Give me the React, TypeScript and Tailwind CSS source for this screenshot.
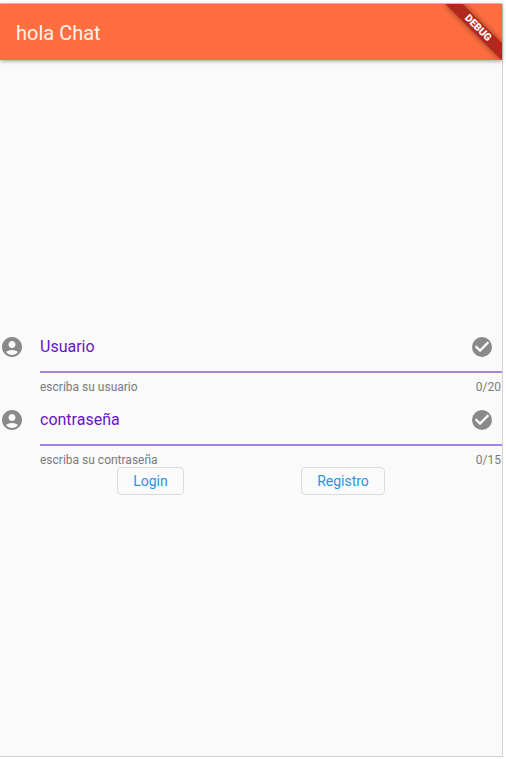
function AccountIcon() {
  return (
    <svg viewBox="0 0 24 24" className="size-6 shrink-0 fill-[#898989]">
      <path d="M12 2C6.48 2 2 6.48 2 12s4.48 10 10 10 10-4.48 10-10S17.52 2 12 2zm0 4c1.93 0 3.5 1.57 3.5 3.5S13.93 13 12 13s-3.5-1.57-3.5-3.5S10.07 6 12 6zm0 14c-2.03 0-4.43-.82-6.14-2.88C7.55 15.8 9.68 15 12 15s4.45.8 6.14 2.12C16.43 19.18 14.03 20 12 20z" />
    </svg>
  );
}

function CheckIcon() {
  return (
    <svg viewBox="0 0 24 24" className="size-6 shrink-0">
      <circle cx="12" cy="12" r="10" className="fill-[#898989]" />
      <path
        d="M10 17l-5-5 1.41-1.41L10 14.17l7.59-7.59L19 8z"
        className="fill-[#fafafa] stroke-[#fafafa]"
        strokeWidth="0.4"
      />
    </svg>
  );
}

type FieldProps = { label: string; helper: string; counter: string; line: string };

function Field({ label, helper, counter, line }: FieldProps) {
  return (
    <div className="flex h-[73px]">
      <div className="w-10 shrink-0 pt-3">
        <AccountIcon />
      </div>
      <div className="min-w-0 flex-1">
        <div className={`flex h-[50px] items-center justify-between border-b-2 pr-2 ${line}`}>
          <span className="text-base leading-6 text-[#6714cc]">{label}</span>
          <CheckIcon />
        </div>
        <div className="flex justify-between pt-[6px] pr-px text-xs leading-4 text-[#7b7b7b]">
          <span>{helper}</span>
          <span>{counter}</span>
        </div>
      </div>
    </div>
  );
}

function OutlineButton({ label, width }: { label: string; width: string }) {
  return (
    <button className={`flex h-7 items-center justify-center rounded border border-[#dcdcdc] text-sm text-[#2b93e6] ${width}`}>
      {label}
    </button>
  );
}

export default function App() {
  return (
    <div className="h-[759px] bg-white pt-[3px] font-['Roboto',sans-serif]">
      <div className="flex h-[754px] w-[503px] flex-col border-t border-r border-b border-[#d3d3d3] bg-[#fafafa]">
        <header className="relative h-14 shrink-0 bg-[#ff6e40] shadow-[0_1px_4px_rgba(0,0,0,0.4)]">
          <h1 className="flex h-full items-center pt-0.5 pl-4 text-xl text-[#fff3ec]">hola Chat</h1>
          <div className="absolute inset-0 overflow-hidden">
            <div className="absolute top-[18px] -right-4 flex h-3 w-20 rotate-45 items-center justify-center bg-[#b3281e] text-[10.2px] leading-3 font-black text-white shadow-[0_0_6px_rgba(0,0,0,0.5)]">
              DEBUG
            </div>
          </div>
        </header>
        <main className="flex flex-col pt-[263px]">
          <Field label="Usuario" helper="escriba su usuario" counter="0/20" line="border-[#a985d0]" />
          <Field label="contraseña" helper="escriba su contraseña" counter="0/15" line="border-[#a282e6]" />
          <div className="-mt-[2px] flex gap-[117px] pl-[117px]">
            <OutlineButton label="Login" width="w-[67px]" />
            <OutlineButton label="Registro" width="w-[84px]" />
          </div>
        </main>
      </div>
    </div>
  );
}
